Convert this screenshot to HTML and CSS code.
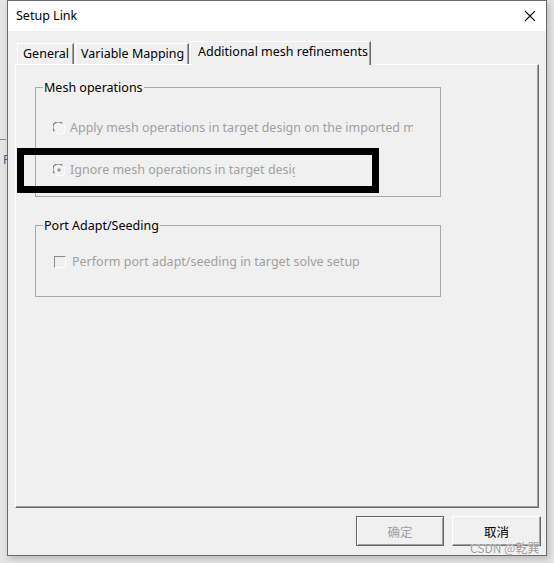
FILE: index.html
```html
<!DOCTYPE html>
<html>
<head>
<meta charset="utf-8">
<link rel="stylesheet" href="styles.css">
</head>
<body>
<div class="bg-mark bg-line"></div>
<div class="bg-mark bg-f">F</div>
<div class="dialog">
  <div class="titlebar">
    <span class="title">Setup Link</span>
    <svg class="close" width="12" height="12" viewBox="0 0 12 12"><path d="M1 1 L11 11 M11 1 L1 11" stroke="#111" stroke-width="1.1" fill="none"/></svg>
  </div>
  <div class="content">
    <div class="tabs">
      <div class="tab tab-general">General</div>
      <div class="tab tab-vm">Variable Mapping</div>
      <div class="tab tab-sel">Additional mesh refinements</div>
    </div>
    <div class="panel">
      <fieldset class="group group-mesh">
        <legend>Mesh operations</legend>
        <div class="opt opt-first">
          <svg class="radio" width="12" height="12" viewBox="0 0 12 12">
            <circle cx="6" cy="6" r="5.5" fill="#f0f0f0"/>
            <path d="M1.4 9.2 A5 5 0 0 1 9.2 1.4" stroke="#7a7a7a" stroke-width="1.3" fill="none"/>
            <path d="M10.6 2.8 A5 5 0 0 1 2.8 10.6" stroke="#ffffff" stroke-width="1.3" fill="none"/>
            <circle cx="6" cy="6" r="3.9" fill="#f4f4f4"/>
          </svg>
          <span class="label clip1">Apply mesh operations in target design on the imported mesh</span>
        </div>
        <div class="opt opt-second">
          <svg class="radio" width="12" height="12" viewBox="0 0 12 12">
            <circle cx="6" cy="6" r="5.5" fill="#f0f0f0"/>
            <path d="M1.4 9.2 A5 5 0 0 1 9.2 1.4" stroke="#7a7a7a" stroke-width="1.3" fill="none"/>
            <path d="M10.6 2.8 A5 5 0 0 1 2.8 10.6" stroke="#ffffff" stroke-width="1.3" fill="none"/>
            <circle cx="6" cy="6" r="3.9" fill="#f4f4f4"/>
            <circle cx="6" cy="6" r="1.8" fill="#9a9a9a"/>
          </svg>
          <span class="label clip2">Ignore mesh operations in target design</span>
        </div>
      </fieldset>
      <fieldset class="group group-port">
        <legend>Port Adapt/Seeding</legend>
        <div class="opt opt-check">
          <span class="check"></span>
          <span class="label">Perform port adapt/seeding in target solve setup</span>
        </div>
      </fieldset>
    </div>
    <div class="buttons">
      <div class="btn btn-ok">确定</div>
      <div class="btn btn-cancel">取消</div>
    </div>
  </div>
</div>
<div class="annot"></div>
<div class="watermark">CSDN @乾巽</div>
</body>
</html>
```
FILE: styles.css
```css
html, body {
  margin: 0;
  padding: 0;
}
body {
  width: 554px;
  height: 563px;
  background: #e4e4e4;
  font-family: "Noto Sans", "Noto Sans CJK SC", sans-serif;
  font-size: 12px;
  color: #000;
  position: relative;
  overflow: hidden;
}
.bg-mark {
  position: absolute;
}
.bg-line {
  left: 0;
  top: 139px;
  width: 6px;
  height: 1px;
  background: #8a8a8a;
}
.bg-f {
  left: 3px;
  top: 152px;
  font-size: 12px;
  color: #2a5c9a;
  line-height: 16px;
}
.dialog {
  margin-left: 7px;
  width: 540px;
  height: 556px;
  box-sizing: border-box;
  border: 1px solid #6b6b6b;
  background: #f0f0f0;
  display: flex;
  flex-direction: column;
  box-shadow: 2px 3px 6px rgba(0,0,0,0.18);
  position: relative;
}
.titlebar {
  height: 30px;
  background: #ffffff;
  display: flex;
  align-items: center;
  justify-content: space-between;
  padding: 0 8px 0 8px;
}
.title {
  font-size: 12.5px;
  line-height: 16px;
}
.close {
  margin-right: 2px;
}
.content {
  flex: 1;
  display: flex;
  flex-direction: column;
  padding: 10px 5px 0 7px;
}
.tabs {
  display: flex;
  align-items: flex-end;
  height: 23px;
  padding-left: 2px;
  position: relative;
  z-index: 2;
}
.tab {
  box-sizing: border-box;
  height: 21px;
  border-top: 1px solid #ffffff;
  border-left: 1px solid #ffffff;
  border-right: 1px solid #696969;
  line-height: 20px;
  font-size: 12.5px;
  padding-left: 5px;
  white-space: nowrap;
  margin-right: 1px;
  box-shadow: inset -1px 0 0 #a0a0a0;
}
.tab-general { width: 57px; }
.tab-vm { width: 114px; }
.tab-sel {
  width: 181px;
  height: 24px;
  margin-bottom: -1px;
  padding-left: 7px;
  line-height: 19px;
  background: #f0f0f0;
}
.panel {
  box-sizing: border-box;
  width: 524px;
  height: 444px;
  border-top: 1px solid #ffffff;
  border-left: 1px solid #ffffff;
  border-right: 1px solid #696969;
  border-bottom: 1px solid #696969;
  box-shadow: inset -1px -1px 0 #a0a0a0;
  padding: 14px 0 0 19px;
}
.group {
  margin: 0;
  padding: 0;
  width: 406px;
  box-sizing: border-box;
  border: 1px solid #a9a9a9;
  min-width: 0;
}
.group legend {
  padding: 0 1px;
  margin-left: 7px;
  font-size: 12.5px;
  line-height: 17px;
}
.group-mesh {
  height: 118px;
}
.group-port {
  margin-top: 20px;
  height: 80px;
}
.opt {
  display: flex;
  align-items: center;
  height: 16px;
  color: #a0a0a0;
}
.opt-first {
  margin-top: 24px;
  margin-left: 17px;
}
.opt-second {
  margin-top: 26px;
  margin-left: 17px;
}
.opt-check {
  margin-top: 20px;
  margin-left: 18px;
}
.radio {
  flex: none;
  margin-right: 5px;
}
.label {
  white-space: nowrap;
  overflow: hidden;
  font-size: 12.5px;
  line-height: 16px;
}
.clip1 { width: 343px; }
.clip2 { width: 225px; }
.check {
  flex: none;
  width: 12px;
  height: 12px;
  box-sizing: border-box;
  border-top: 1px solid #8a8a8a;
  border-left: 1px solid #8a8a8a;
  border-right: 1px solid #ffffff;
  border-bottom: 1px solid #ffffff;
  margin-right: 6px;
}
.buttons {
  display: flex;
  justify-content: flex-end;
  gap: 8px;
  margin-top: 8px;
}
.btn {
  box-sizing: border-box;
  height: 30px;
  display: flex;
  align-items: center;
  justify-content: center;
  font-family: "Noto Sans CJK SC", sans-serif;
  font-size: 12.5px;
}
.btn-ok {
  width: 88px;
  color: #a0a0a0;
  border: 1px solid #646464;
  box-shadow: inset 1px 1px 0 #ffffff, inset -1px -1px 0 #a0a0a0;
}
.btn-cancel {
  width: 89px;
  color: #000;
  border-top: 1px solid #ffffff;
  border-left: 1px solid #ffffff;
  border-right: 1px solid #696969;
  border-bottom: 1px solid #696969;
  box-shadow: inset -1px -1px 0 #a0a0a0;
}
.annot {
  position: absolute;
  left: 17px;
  top: 148px;
  width: 362px;
  height: 45px;
  box-sizing: border-box;
  border: 7px solid #000;
}
.watermark {
  position: absolute;
  left: 470px;
  top: 540px;
  font-family: "Noto Sans CJK SC", sans-serif;
  font-size: 12px;
  line-height: 16px;
  color: #9a9a9a;
  text-shadow: 0 0 1px #fff, 0 0 1px #fff;
}
```
